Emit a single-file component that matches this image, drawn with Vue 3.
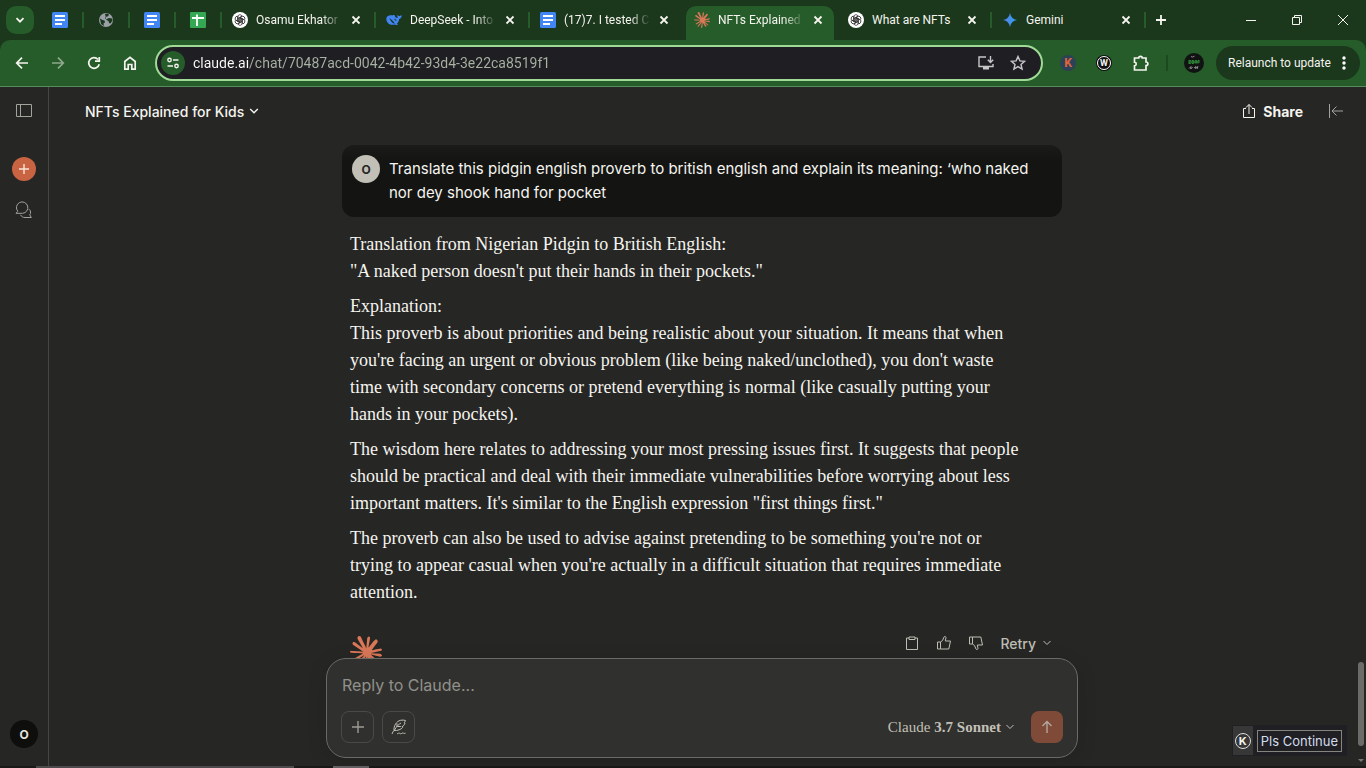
<template>
  <div class="browser">
    <!-- tab strip -->
    <header class="tab-strip">
      <button class="tab-search" aria-label="Search tabs">
        <svg width="12" height="12" viewBox="0 0 12 12"><path d="M2.5 4.2 6 7.7l3.5-3.5" class="line bold" /></svg>
      </button>
      <div v-for="(pin, i) in pinned" :key="'p' + i" class="pin divided">
        <svg v-if="pin === 'docs'" width="16" height="16" viewBox="0 0 16 16">
          <rect width="16" height="16" rx="1.5" fill="#4285f4" />
          <path d="M3 4h10M3 8h10M3 12h7" stroke="#fff" stroke-width="1.8" />
        </svg>
        <svg v-else-if="pin === 'sheets'" width="16" height="16" viewBox="0 0 16 16">
          <rect width="16" height="16" rx="1" fill="#34a853" />
          <path d="M2 6h12M7 2.500v11.500" stroke="#fff" stroke-width="1.8" />
        </svg>
        <svg v-else width="16" height="16" viewBox="0 0 16 16">
          <circle cx="8" cy="8" r="7" fill="#9aa0a6" />
          <path d="M2 6.500 4.500 8l2 .5.5 2-1.500 1 .5 2.500L3 12zM7 2l3-.6 1 1.600-1.500 1.500-2 .5L7 6.500l2 .5 2-1 3 .5.5 2-2 3-1.500-.5-.5-2-2-1" fill="#1b371c" />
        </svg>
      </div>

      <div
        v-for="(tab, i) in tabs"
        :key="tab.title"
        class="tab"
        :class="{ active: i === activeTab, divided: tab.divided }"
        @click="activeTab = i"
      >
        <span class="favicon">
          <svg v-if="tab.icon === 'gpt'" width="16" height="16" viewBox="0 0 16 16">
            <circle cx="8" cy="8" r="8" fill="#fff" />
            <path
              v-for="n in 6"
              :key="n"
              :transform="`rotate(${n * 60} 8 8)`"
              d="M5.700 9.300V5.100a2.300 2.300 0 0 1 4.300-1.200M7 8.600V6.200l3.200-1.900"
              fill="none"
              stroke="#222"
              stroke-width=".75"
            />
          </svg>
          <svg v-else-if="tab.icon === 'deepseek'" width="16" height="16" viewBox="0 0 16 16">
            <path d="M.3 6.500C.7 4 3.500 2.900 6.500 3.500c.8-.5 1.700-.5 2.300-.2-.3.600.2 1.500 1.200 2.300.8.600 1.500.500 1.900-.1-.8-.8-.7-1.900-.3-2.400.5.800 1.400 1 2.200.8.800-.2 1.300-.6 2-.7-.1 2.200-1.200 3.500-2.700 3.800-.1 2-1 3.500-2.200 4.600l1.200.9c-1.200.7-2.600.6-3.600 0C5 13.800.2 11.500.3 6.500z" fill="#4285f4" />
            <path d="M3 6.400c2 .1 3.400 1.800 4.500 3.400.5.800 1 1.300 1.800 1.700-2.300.4-3.500-.8-4.200-2.200C4.500 8.200 4 7.100 3 6.400zM8 6.700c1.300-.3 2.400.7 2.400 2.200-.9-.2-1.800-.9-2.400-2.200z" fill="#1b371c" />
          </svg>
          <svg v-else-if="tab.icon === 'docs'" width="16" height="16" viewBox="0 0 16 16">
            <rect width="16" height="16" rx="1.5" fill="#4285f4" />
            <path d="M3 4h10M3 8h10M3 12h7" stroke="#fff" stroke-width="1.8" />
          </svg>
          <svg v-else-if="tab.icon === 'claude'" width="16" height="16" viewBox="0 0 24 24"><path :d="burst" fill="#d97757" /></svg>
          <svg v-else width="16" height="16" viewBox="0 0 16 16">
            <defs>
              <linearGradient id="gem" x1="0" y1="0" x2="1" y2="0">
                <stop offset="0" stop-color="#5b7fe0" />
                <stop offset="1" stop-color="#2ba3f5" />
              </linearGradient>
            </defs>
            <path d="M8 1c.7 4 3 6.300 7 7-4 .7-6.300 3-7 7-.7-4-3-6.300-7-7 4-.7 6.300-3 7-7z" fill="url(#gem)" />
          </svg>
        </span>
        <span class="tab-title" :class="{ faded: tab.faded }">{{ tab.title }}</span>
        <button class="tab-close" aria-label="Close tab">
          <svg width="16" height="16" viewBox="0 0 16 16"><path d="m4.500 4.500 7 7m0-7-7 7" class="line bold" /></svg>
        </button>
      </div>
      <button class="new-tab" aria-label="New tab">
        <svg width="16" height="16" viewBox="0 0 16 16"><path d="M8 3v10M3 8h10" class="line bold" /></svg>
      </button>

      <div class="window-controls">
        <button aria-label="Minimize"><svg width="12" height="12" viewBox="0 0 12 12"><path d="M1 6.500h10" class="line" /></svg></button>
        <button aria-label="Restore">
          <svg width="12" height="12" viewBox="0 0 12 12"><path d="M1.500 3.500h7v7h-7zM3.500 3.500v-2h7v7h-2" class="line" /></svg>
        </button>
        <button aria-label="Close"><svg width="12" height="12" viewBox="0 0 12 12"><path d="m1 1 10 10M11 1 1 11" class="line" /></svg></button>
      </div>
    </header>

    <!-- toolbar -->
    <nav class="toolbar">
      <button class="tool" aria-label="Back">
        <svg width="16" height="16" viewBox="0 0 16 16"><path d="M14 8H3m5-5.300L2.700 8 8 13.300" class="line thick" /></svg>
      </button>
      <button class="tool dim" aria-label="Forward">
        <svg width="16" height="16" viewBox="0 0 16 16"><path d="M2 8h11M8 2.700 13.300 8 8 13.300" class="line thick" /></svg>
      </button>
      <button class="tool" aria-label="Reload">
        <svg width="16" height="16" viewBox="0 0 16 16"><path d="M13.200 9.200A5.300 5.300 0 1 1 12 4.500M13.300 2v4.200H9" class="line thick" /></svg>
      </button>
      <button class="tool" aria-label="Home">
        <svg width="16" height="16" viewBox="0 0 16 16"><path d="M2.800 14.200V6.500L8 2.300l5.200 4.200v7.700H9.800V9.500H6.200v4.700z" class="line thick" /></svg>
      </button>

      <div class="omnibox">
        <button class="site-info" aria-label="View site information">
          <svg width="14" height="14" viewBox="0 0 14 14"><circle cx="3.500" cy="4" r="1.700" class="line mid" /><circle cx="10.500" cy="10" r="1.700" class="line mid" /><path d="M7 4h5.500M1.500 10H7" class="line mid" /></svg>
        </button>
        <input v-model="url" class="url" aria-label="Address" spellcheck="false" />
        <button class="omni-btn" aria-label="Install app">
          <svg width="18" height="16" viewBox="0 0 18 16"><path d="M9 2H2v9.500h14V9M13.500 1v6.500m-2.700-2.800 2.700 2.700 2.700-2.700" class="line mid" /><path d="M6 12h6v2.500H6z" fill="#c7c7c7" /></svg>
        </button>
        <button class="omni-btn" aria-label="Bookmark">
          <svg width="16" height="16" viewBox="0 0 16 16"><path d="m8 1.500 1.900 4.400 4.700.4-3.600 3.100 1.100 4.700L8 11.600l-4.100 2.500L5 9.400 1.400 6.300l4.700-.4z" class="line mid" /></svg>
        </button>
      </div>

      <button class="ext ext-k"><span>K</span></button>
      <button class="ext ext-w"><span>W</span></button>
      <button class="ext" aria-label="Extensions">
        <svg width="18" height="18" viewBox="0 0 18 18"><path d="M3.500 4h4.200c0-2.300 3.600-2.300 3.600 0H15v4c2.500 0 2.500 3.500 0 3.500V16H3.500v-4.200c2.300-.2 2.300-3.400 0-3.600z" class="line thick" /></svg>
      </button>
      <i class="tool-sep"></i>
      <button class="ext profile" aria-label="Profile">
        <svg width="20" height="20" viewBox="0 0 20 20">
          <circle cx="10" cy="10" r="10" fill="#101312" />
          <path d="M4.500 7.500h2.200L4.800 10.500h2M8 7.500v3h1.600v-3zM11.200 10.500v-3h1.500v3M14 10.500v-3h1.500M4 9h12" fill="none" stroke="#2f8a37" />
          <path d="M7 3.500l1.500.5 2-.8M5 15.500l2-2-.3 2.500 2-2M10 15l2-1.500-.5 2 2.500-2-1 2.500" fill="none" stroke="#b8bdb9" stroke-width=".7" />
        </svg>
      </button>
      <button class="relaunch">
        <span>Relaunch to update</span>
        <svg width="4" height="16" viewBox="0 0 4 16"><circle cx="2" cy="3" r="1.700" fill="#fff" /><circle cx="2" cy="8" r="1.700" fill="#fff" /><circle cx="2" cy="13" r="1.700" fill="#fff" /></svg>
      </button>
    </nav>

    <!-- page -->
    <div class="page">
      <aside class="sidebar">
        <button class="side-btn" aria-label="Open sidebar">
          <svg width="18" height="16" viewBox="0 0 18 16"><path d="M1.500 1.500h15v12h-15zM5.500 1.500v12" class="line" /></svg>
        </button>
        <button class="new-chat" aria-label="New chat">
          <svg width="12" height="12" viewBox="0 0 12 12"><path d="M6 1v10M1 6h10" class="line mid" /></svg>
        </button>
        <button class="side-btn" aria-label="Chats">
          <svg width="18" height="18" viewBox="0 0 18 18"><path d="M1 12.300 2.800 10.300A5.700 5.700 0 1 1 7.500 12.300zM14 8.200c2 1.600 2 4 .8 5.600l1.500 2.700H10c-2 0-3.700-1-4.500-2.700" class="line" /></svg>
        </button>
        <button class="account">O</button>
      </aside>

      <main class="chat">
        <div class="chat-header">
          <button class="chat-title">
            NFTs Explained for Kids
            <svg width="10" height="10" viewBox="0 0 10 10"><path d="m1.200 3 3.800 3.800L8.800 3" class="line mid" /></svg>
          </button>
          <button class="share">
            <svg width="14" height="16" viewBox="0 0 14 16"><path d="M4 5.500H1.500v9h11v-9H10M7 11V1.500M4 4.500l3-3 3 3" class="line" /></svg>
            Share
          </button>
          <button class="side-btn" aria-label="Open panel">
            <svg width="16" height="16" viewBox="0 0 16 16"><path d="M1.500 1v14M15 8H4m4.500-4.500L4 8l4.500 4.500" class="line" /></svg>
          </button>
        </div>

        <div class="thread">
          <div class="question">
            <span class="avatar">O</span>
            <p>{{ question }}</p>
          </div>
          <div class="answer">
            <p v-for="(text, i) in answer" :key="i">{{ text }}</p>
          </div>
          <div class="actions">
            <svg class="burst" width="32" height="32" viewBox="0 0 24 24"><path :d="burst" fill="#d97757" /></svg>
            <button aria-label="Copy">
              <svg width="16" height="16" viewBox="0 0 16 16"><path d="M5 3H2.500v11.500h11V3H11M5 2h6v2.500H5z" class="line" /></svg>
            </button>
            <button aria-label="Good response">
              <svg width="16" height="16" viewBox="0 0 16 16"><path :d="thumb" class="line" /></svg>
            </button>
            <button aria-label="Bad response">
              <svg width="16" height="16" viewBox="0 0 16 16"><path :d="thumb" class="line" transform="matrix(1 0 0 -1 0 16)" /></svg>
            </button>
            <button class="retry">
              Retry
              <svg width="10" height="10" viewBox="0 0 10 10"><path d="m1.500 3 3.500 3.500L8.500 3" class="line" /></svg>
            </button>
          </div>
        </div>

        <form class="composer" @submit.prevent>
          <input v-model="draft" type="text" placeholder="Reply to Claude..." aria-label="Reply to Claude" />
          <div class="composer-row">
            <button type="button" class="square" aria-label="Attach">
              <svg width="14" height="14" viewBox="0 0 14 14"><path d="M7 1v12M1 7h12" class="line mid" /></svg>
            </button>
            <button type="button" class="square" aria-label="Choose style">
              <svg width="16" height="16" viewBox="0 0 16 16"><path d="M1 15c.5-1.500 1-2.500 2-3.500C2.500 7 5.500 2.200 9.500 1.300c2-.4 3.800-.3 5 .2-.3 1-.9 1.600-1.300 2l.8.500c-.5 1.800-1.500 3-3 3.700l.6.800c-1.500 2-5 3.300-8.600 3M3.500 11C5.500 7.500 7.500 5.500 10 4M6 8V4.500M6.500 7.500h3.300M6 14.500c1 .8 1.500-1 2.500-.3s1.500.8 2.500 0 1.500.8 3.500 0" class="line" /></svg>
            </button>
            <button type="button" class="model">
              <span>Claude</span><b>3.7 Sonnet</b>
              <svg width="10" height="10" viewBox="0 0 10 10"><path d="m1.500 3 3.500 3.500L8.500 3" class="line" /></svg>
            </button>
            <button type="submit" class="send" aria-label="Send">
              <svg width="14" height="14" viewBox="0 0 14 14"><path d="M7 13V1.500M2.500 6 7 1.500 11.500 6" class="line mid" /></svg>
            </button>
          </div>
        </form>
      </main>

      <div class="scrollbar">
        <div class="thumb"></div>
        <svg width="6" height="3" viewBox="0 0 6 3"><path d="M0 0h6L3 3z" fill="#77776f" /></svg>
      </div>

      <div class="assist">
        <span class="assist-logo"><em>K</em></span>
        <button>Pls Continue</button>
      </div>
    </div>
    <footer class="bottom-edge"><i></i><i></i></footer>
  </div>
</template>

<script setup>
import { ref } from 'vue';

const pinned = ['docs', 'globe', 'docs', 'sheets'];

const tabs = [
  { icon: 'gpt', title: 'Osamu Ekhator', faded: true, divided: true },
  { icon: 'deepseek', title: 'DeepSeek - Into', faded: true, divided: true },
  { icon: 'docs', title: '(17)7. I tested C', faded: true },
  { icon: 'claude', title: 'NFTs Explained :', faded: true },
  { icon: 'gpt', title: 'What are NFTs', divided: true },
  { icon: 'gemini', title: 'Gemini', divided: true },
];
const activeTab = ref(3);

const url = ref('claude.ai/chat/70487acd-0042-4b42-93d4-3e22ca8519f1');
const draft = ref('');

const question =
  'Translate this pidgin english proverb to british english and explain its meaning: ‘who naked\nnor dey shook hand for pocket';

const answer = [
  'Translation from Nigerian Pidgin to British English:\n"A naked person doesn\'t put their hands in their pockets."',
  "Explanation:\nThis proverb is about priorities and being realistic about your situation. It means that when\nyou're facing an urgent or obvious problem (like being naked/unclothed), you don't waste\ntime with secondary concerns or pretend everything is normal (like casually putting your\nhands in your pockets).",
  'The wisdom here relates to addressing your most pressing issues first. It suggests that people\nshould be practical and deal with their immediate vulnerabilities before worrying about less\nimportant matters. It\'s similar to the English expression "first things first."',
  "The proverb can also be used to advise against pretending to be something you're not or\ntrying to appear casual when you're actually in a difficult situation that requires immediate\nattention.",
];

const thumb = 'M4.500 7H1.500v7h3M4.500 7v7h8.300l1.700-8H9.300l.7-3.500c0-1-1.500-1.500-2-.5L6.500 5.500z';

const burst =
  'm4.7144 15.9555 4.7174-2.6471.079-.2307-.079-.1275h-.2307l-.7893-.0486-2.6956-.0729-2.3375-.0971-2.2646-.1214-.5707-.1215-.5343-.7042.0546-.3522.4797-.3218.686.0608 1.5179.1032 2.2767.1578 1.6514.0972 2.4468.255h.3886l.0546-.1579-.1336-.0971-.1032-.0972L6.973 9.8356l-2.55-1.6879-1.3356-.9714-.7225-.4918-.3643-.4614-.1578-1.0078.6557-.7225.8803.0607.2246.0607.8925.686 1.9064 1.4754 2.4893 1.8336.3643.3035.1457-.1032.0182-.0728-.164-.2733-1.3539-2.4467-1.445-2.4893-.6435-1.032-.17-.6194c-.0607-.255-.1032-.4674-.1032-.7285L6.287.1335 6.6997 0l.9957.1336.419.3642.6192 1.4147 1.0018 2.2282 1.5543 3.0296.4553.8985.2429.8318.091.255h.1579v-.1457l.1275-1.706.2368-2.0947.2307-2.6957.0789-.7589.3764-.9107.7468-.4918.5828.2793.4797.686-.0668.4433-.2853 1.8517-.5586 2.9021-.3643 1.9429h.2125l.2429-.2429.9835-1.3053 1.6514-2.0643.7286-.8196.85-.9046.5464-.4311h1.0321l.759 1.1293-.34 1.1657-1.0625 1.3478-.8804 1.1414-1.2628 1.7-.7893 1.36.0729.1093.1882-.0183 2.8535-.607 1.5421-.2794 1.8396-.3157.8318.3886.091.3946-.3278.8075-1.967.4857-2.3072.4614-3.4364.8136-.0425.0304.0486.0607 1.5482.1457.6618.0364h1.621l3.0175.2247.7892.522.4736.6376-.079.4857-1.2142.6193-1.6393-.3886-3.825-.9107-1.3113-.3279h-.1822v.1093l1.0929 1.0686 2.0035 1.8092 2.5075 2.3314.1275.5768-.3218.4554-.34-.0486-2.2039-1.6575-.85-.7468-1.9246-1.621h-.1275v.17l.4432.6496 2.3436 3.5214.1214 1.0807-.17.3521-.6071.2125-.6679-.1214-1.3721-1.9246L14.38 17.959l-1.1414-1.9428-.1397.079-.674 7.2552-.3156.3703-.7286.2793-.6071-.4614-.3218-.7468.3218-1.4753.3886-1.9246.3157-1.53.2853-1.9004.17-.6314-.0121-.0425-.1397.0182-1.4328 1.9672-2.1796 2.9446-1.7243 1.8456-.4128.164-.7164-.3704.0667-.6618.4008-.5889 2.386-3.0357 1.4389-1.882.929-1.0868-.0062-.1579h-.0546l-6.3385 4.1164-1.1293.1457-.4857-.4554.0608-.7467.2307-.2429 1.9064-1.3114Z';
</script>

<style>
body {
  background: #262624;
}
</style>

<style scoped>
.browser {
  display: flex;
  flex-direction: column;
  height: 100vh;
  overflow: hidden;
  background: #1b371c;
  color: #f5f4ef;
  font-family: Roboto, "Noto Sans", sans-serif;
}

button {
  display: flex;
  align-items: center;
  justify-content: center;
  flex-shrink: 0;
  padding: 0;
  border: none;
  background: none;
  color: inherit;
  font: inherit;
  cursor: pointer;
}

svg {
  display: block;
  flex-shrink: 0;
}

.line {
  fill: none;
  stroke: currentColor;
  stroke-width: 1;
}

.line.mid {
  stroke-width: 1.4;
}

.line.thick {
  stroke-width: 1.7;
}

.line.bold {
  stroke-width: 1.8;
}

/* tab strip */
.tab-strip {
  display: flex;
  align-items: center;
  height: 40px;
  padding-left: 6px;
  font-size: 12px;
}

.tab-search {
  width: 28px;
  height: 28px;
  margin-right: 3px;
  border-radius: 10px;
  background: #265c2a;
}

.pin {
  position: relative;
  display: flex;
  justify-content: center;
  width: 46px;
}

.tab {
  position: relative;
  z-index: 0;
  display: flex;
  align-items: center;
  width: 154px;
  height: 40px;
  padding: 0 11px;
  box-sizing: border-box;
}

.divided::after {
  content: "";
  position: absolute;
  right: -1px;
  top: 50%;
  width: 2px;
  height: 16px;
  margin-top: -8px;
  background: #265c2a;
}

.tab.active::before {
  content: "";
  position: absolute;
  z-index: -1;
  inset: 6px 3px 0;
  border-radius: 10px 10px 0 0;
  background: #265c2a;
}

.favicon {
  margin-right: 8px;
}

.tab-title {
  flex: 1;
  min-width: 0;
  margin-right: 4px;
  white-space: nowrap;
}

.tab-close {
  margin-right: 0;
}

.tab-title.faded {
  mask-image: linear-gradient(to right, #000 75%, transparent 98%);
}

.new-tab {
  width: 32px;
  height: 28px;
}

.window-controls {
  display: flex;
  margin-left: auto;
}

.window-controls button {
  width: 46px;
  height: 40px;
}

/* toolbar */
.toolbar {
  display: flex;
  align-items: center;
  height: 46px;
  padding: 0 6px 0 4px;
  border-bottom: 1px solid #578d5c;
  border-radius: 10px 10px 0 0;
  background: #265c2a;
}

.tool {
  width: 36px;
  height: 34px;
}

.dim {
  opacity: 0.5;
}

.omnibox {
  display: flex;
  align-items: center;
  flex: 1;
  height: 36px;
  margin: 0 7px;
  padding: 0 7px 0 4px;
  box-sizing: border-box;
  border: 2px solid #9fdb96;
  border-radius: 18px;
  background: #1f1f23;
}

.site-info {
  width: 24px;
  height: 24px;
  border-radius: 50%;
  background: #265c2a;
}

.url {
  flex: 1;
  min-width: 0;
  margin-left: 8px;
  padding: 0;
  border: none;
  outline: none;
  font: 14px Roboto, "Noto Sans", sans-serif;
  background: linear-gradient(to right, #fff 56px, #a9b3a5 56px);
  background-clip: text;
  color: transparent;
}

.omni-btn {
  width: 32px;
  height: 32px;
  color: #c7c7c7;
}

.ext {
  width: 36px;
  height: 34px;
}

.ext span {
  display: flex;
  align-items: center;
  justify-content: center;
  width: 16px;
  height: 16px;
  border-radius: 50%;
  font-weight: 700;
}

.ext-k span {
  background: #2c4256;
  color: #e0653a;
  font-size: 12px;
}

.ext-w span {
  width: 12px;
  height: 12px;
  border: 1px solid #fff;
  background: #111;
  box-shadow: 0 0 0 1px #111;
  font-size: 9px;
}

.tool-sep {
  width: 2px;
  height: 16px;
  margin: 0 8px;
  background: #1b4a1f;
}

.relaunch {
  justify-content: space-between;
  width: 144px;
  height: 34px;
  margin-left: 4px;
  padding: 0 14px 0 12px;
  border-radius: 17px;
  background: #1b371c;
  font-size: 12px;
}

/* page */
.page {
  position: relative;
  display: flex;
  flex: 1;
  min-height: 0;
  background: #262624;
  font-family: Inter, "Liberation Sans", sans-serif;
}

.sidebar {
  display: flex;
  flex-direction: column;
  align-items: center;
  flex: 0 0 49px;
  padding: 8px 0 18px;
  box-sizing: border-box;
  border-right: 1px solid #454542;
  color: #a3a29c;
}

.side-btn {
  width: 32px;
  height: 32px;
}

.new-chat {
  width: 24px;
  height: 24px;
  margin: 30px 0 13px;
  border-radius: 50%;
  background: #c96442;
  color: #f9e5d8;
}

.account {
  width: 28px;
  height: 28px;
  margin-top: auto;
  border-radius: 50%;
  background: #0e0e0d;
  color: #e5e4df;
  font-size: 12px;
  font-weight: 700;
}

.chat {
  display: flex;
  flex-direction: column;
  align-items: center;
  flex: 1;
  min-width: 0;
}

.chat-header {
  display: flex;
  align-items: center;
  align-self: stretch;
  flex-shrink: 0;
  height: 48px;
  padding: 0 3px 0 36px;
  box-sizing: border-box;
  font-size: 14px;
  font-weight: 500;
}

.chat-header .side-btn {
  margin-left: 17px;
  color: #a3a29c;
}

.chat-title {
  gap: 5px;
}

.share {
  gap: 7px;
  margin-left: auto;
  font-weight: 700;
}

.thread {
  flex: 1;
  width: 100%;
  max-width: 720px;
  min-height: 0;
  padding-top: 10px;
  box-sizing: border-box;
  overflow: hidden;
}

.question {
  display: flex;
  gap: 9px;
  padding: 10px 10px 12px;
  border-radius: 12px;
  background: linear-gradient(#1b1b19, #141413 16px);
}

.question p {
  margin: 2px 0 0;
  font-size: 15px;
  line-height: 24px;
  white-space: pre-line;
}

.avatar {
  display: flex;
  align-items: center;
  justify-content: center;
  width: 28px;
  height: 28px;
  flex-shrink: 0;
  border-radius: 50%;
  background: #c2c0b6;
  color: #262624;
  font-size: 12px;
  font-weight: 700;
}

.answer {
  display: flex;
  flex-direction: column;
  gap: 8px;
  padding: 14px 8px 0;
  font-family: "Liberation Serif", serif;
  font-size: 18px;
  line-height: 27px;
}

.answer p {
  margin: 0;
  white-space: pre-line;
}

.actions {
  display: flex;
  align-items: flex-start;
  margin-top: 30px;
  padding: 0 8px;
  color: #bfbdb4;
}

.burst {
  margin-right: auto;
}

.actions button {
  width: 32px;
  height: 14px;
}

.actions .retry {
  gap: 6px;
  width: auto;
  margin-left: 8px;
  padding-right: 2px;
  font-size: 14px;
  font-weight: 500;
}

.composer {
  display: flex;
  flex-direction: column;
  justify-content: space-between;
  flex-shrink: 0;
  width: calc(100% - 32px);
  max-width: 752px;
  height: 100px;
  margin-bottom: 8px;
  padding: 14px;
  box-sizing: border-box;
  border: 1px solid #6b6a65;
  border-radius: 20px;
  background: #30302e;
  box-shadow: 0 4px 20px rgba(0, 0, 0, 0.12);
}

.composer input {
  height: 24px;
  padding: 0 1px;
  border: none;
  outline: none;
  background: none;
  color: #f5f4ef;
  font: 16px Inter, "Liberation Sans", sans-serif;
}

.composer input::placeholder {
  color: #91908a;
}

.composer-row {
  display: flex;
  align-items: center;
  gap: 8px;
}

.square {
  width: 33px;
  height: 32px;
  border: 1px solid #4a4a47;
  border-radius: 8px;
  color: #9c9a92;
}

.square + .square {
  color: #c2c0b6;
}

.model {
  gap: 4px;
  margin-left: auto;
  margin-right: 8px;
  color: #c2c0b6;
  font-family: "Liberation Serif", serif;
  font-size: 15px;
}

.send {
  width: 32px;
  height: 32px;
  border-radius: 8px;
  background: #7f4a37;
  color: #b5a79f;
}

.scrollbar {
  display: flex;
  flex-direction: column;
  align-items: center;
  justify-content: flex-end;
  gap: 13px;
  width: 11px;
  padding-bottom: 4px;
}

.scrollbar .thumb {
  width: 6px;
  height: 84px;
  border-radius: 3px;
  background: #6b6b67;
}

.assist {
  position: absolute;
  right: 19px;
  bottom: 10px;
  display: flex;
  align-items: center;
  gap: 4px;
  height: 31px;
  padding: 0 5px 0 1px;
  background: #1f1f24;
}

.assist-logo {
  display: flex;
  align-items: center;
  justify-content: center;
  width: 20px;
  height: 29px;
  background: #373737;
}

.assist-logo em {
  display: flex;
  align-items: center;
  justify-content: center;
  width: 14px;
  height: 14px;
  border: 1px solid #ddd;
  border-radius: 50%;
  font-size: 11px;
  font-style: normal;
  font-weight: 700;
}

.assist button {
  height: 22px;
  padding: 0 3px;
  border: 1px solid #85857f;
  color: #d3dcea;
  font-size: 13px;
}

.bottom-edge {
  display: flex;
  gap: 39px;
  height: 2px;
  padding-left: 36px;
  background: #191917;
}

.bottom-edge i {
  width: 258px;
  background: #4d4b4b;
}

.bottom-edge i + i {
  width: 36px;
  background: #666464;
}
</style>
